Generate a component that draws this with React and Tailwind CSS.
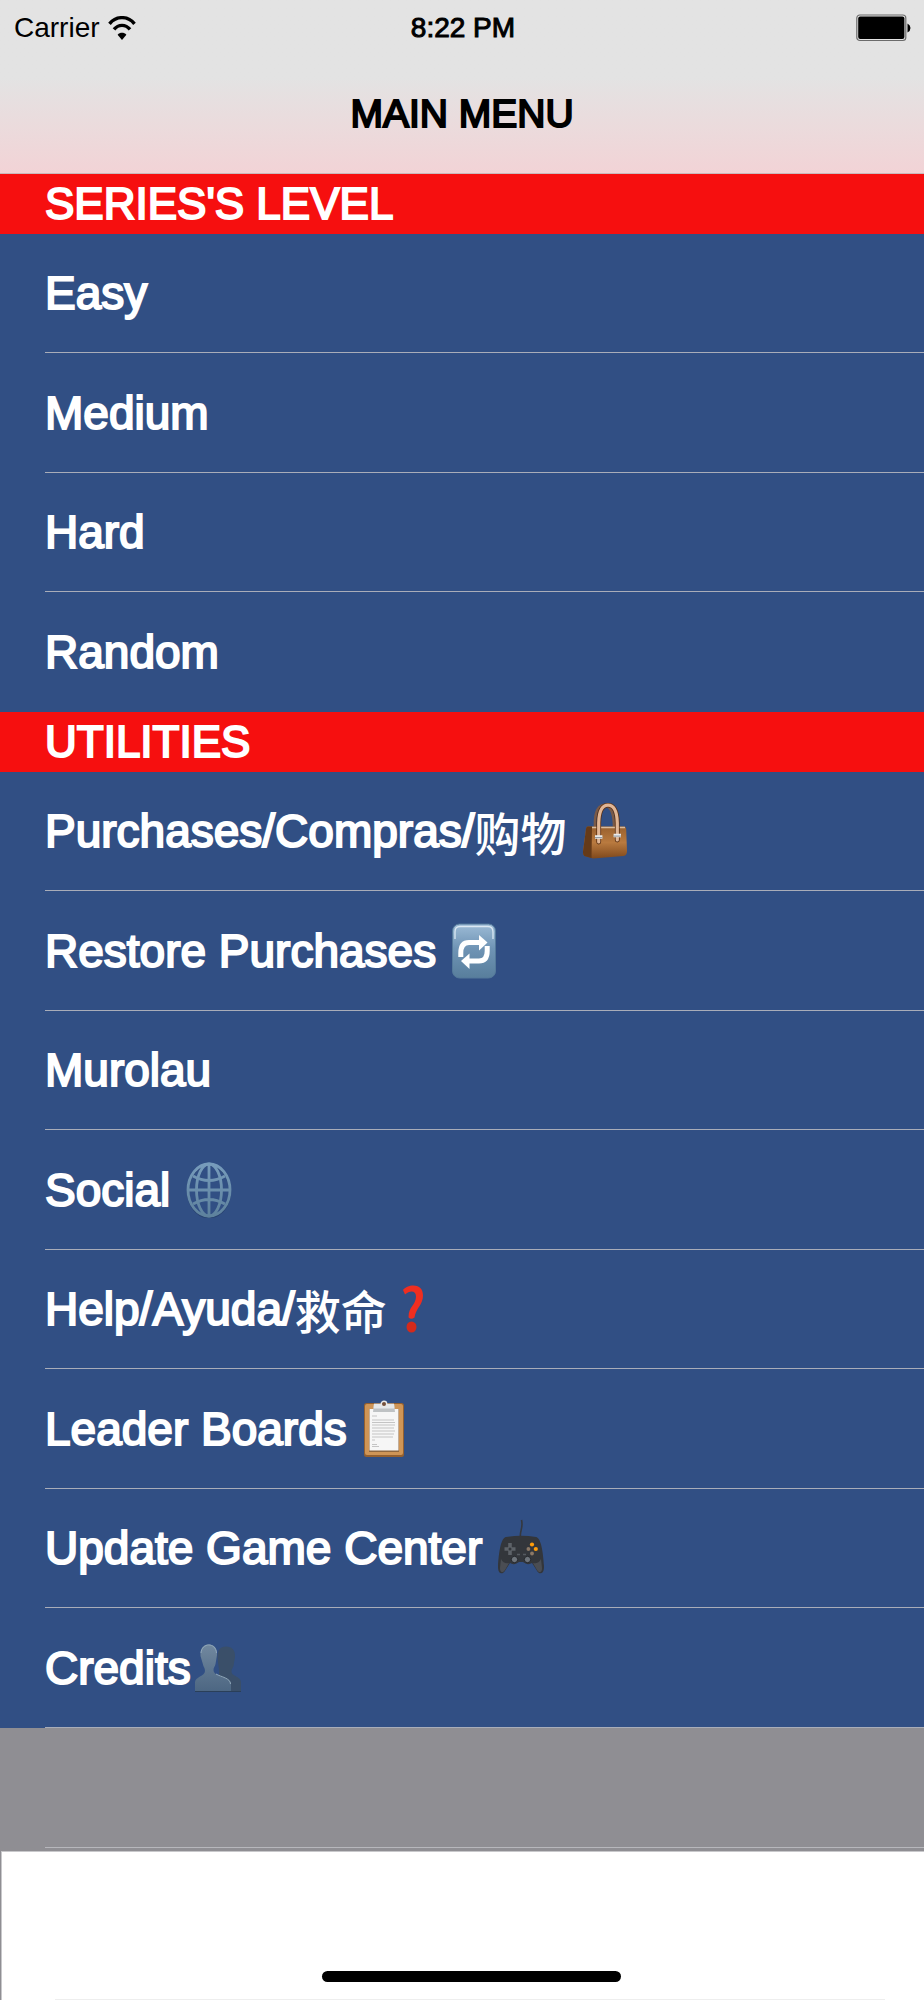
const HEAVY = "[-webkit-text-stroke:2px_currentColor] [paint-order:stroke]";
const MEDIUM = "[-webkit-text-stroke:1px_currentColor]";

function Wifi() {
  return (
    <svg className="h-6 w-7" viewBox="0 0 28 24" fill="none" aria-hidden="true">
      <path d="M1.500 7.800C8.200-.4 19.800-.4 26.500 7.800" stroke="#000" strokeWidth="3.400" />
      <path d="M6 13.400c4.400-5.400 11.600-5.400 16 0" stroke="#000" strokeWidth="3.400" />
      <path d="M14 24l-4.400-5.200c2.400-2.600 6.400-2.600 8.800 0z" fill="#000" />
    </svg>
  );
}

function Battery() {
  return (
    <svg className="h-7 w-14" viewBox="0 0 56 28" aria-hidden="true">
      <rect x=".8" y="1" width="49" height="25.500" rx="3" fill="#e3e3e3" stroke="#6b6b6b" strokeWidth="1.200" />
      <rect x="2.200" y="2.600" width="46.200" height="22.400" rx="2" fill="#000" />
      <path d="M51.500 9.500q3 1.600 3 4.500t-3 4.500z" fill="#000" />
    </svg>
  );
}

function Handbag() {
  return (
    <svg className="h-14 w-11" viewBox="0 0 44 56" fill="none" aria-hidden="true">
      <defs>
        <linearGradient id="bag" x1="0" y1="0" x2="0" y2="1">
          <stop offset="0" stopColor="#98602e" />
          <stop offset=".5" stopColor="#b97a3f" />
          <stop offset="1" stopColor="#80491c" />
        </linearGradient>
      </defs>
      <path d="M12 25V18C12.500 4 19 1 23 2.500c6 2 8 9 8 21.500" stroke="#7a5a48" strokeWidth="2.600" />
      <path d="M4.500 23.500H41q2 0 2.200 3L44 48q0 4.500-3.500 5L10 55.500 1.500 53Q-.2 52 0 48.500L3 26q.3-2.500 1.500-2.500z" fill="url(#bag)" />
      <path d="M4.500 23.500H9L8.500 55 1.500 53Q-.2 52 0 48.500L3 26q.3-2.500 1.500-2.500z" fill="#653a18" />
      <path d="M9 24.500h33" stroke="#d9bb9c" strokeWidth="1.400" />
      <path d="M15.700 39V20C16 8 19.500 2.200 25 2.200S34 8 34.300 20v17" stroke="#5a3013" strokeWidth="4.800" strokeLinecap="round" />
      <path d="M15.700 39V20C16 8 19.500 2.200 25 2.200S34 8 34.300 20v17" stroke="#e0b696" strokeWidth="3.200" strokeLinecap="round" />
      <path d="M12 34h7.400M30.600 32.500H38" stroke="#e9ebec" strokeWidth="3.600" />
      <path d="M12 34.600h7.400M30.600 33.100H38" stroke="#8b9198" strokeWidth="1" />
    </svg>
  );
}

function Repeat() {
  return (
    <svg className="h-14 w-11" viewBox="0 0 44 56" fill="none" aria-hidden="true">
      <defs>
        <linearGradient id="rep" x1="0" y1="0" x2="0" y2="1">
          <stop offset="0" stopColor="#9dbbd6" />
          <stop offset=".45" stopColor="#6f94b5" />
          <stop offset="1" stopColor="#587e9c" />
        </linearGradient>
      </defs>
      <rect x=".5" y="1" width="43" height="54" rx="7" fill="url(#rep)" stroke="#54799a" />
      <path d="M3 16V9q0-5.500 5-5.500h28q5 0 5 5.500v7" stroke="#dbe8f3" strokeWidth="1.300" />
      <path d="M8.800 34v-4q0-10.500 8.200-10.500h10" stroke="#fff" strokeWidth="5" />
      <path d="M27 12l8.500 7.500-8.500 8z" fill="#fff" />
      <path d="M35.200 23v5q0 10-8.200 10H16" stroke="#fff" strokeWidth="5" />
      <path d="M17.500 30.500L9 38l8.500 8z" fill="#fff" />
    </svg>
  );
}

function Globe() {
  return (
    <svg className="h-14 w-[46px]" viewBox="0 0 46 56" fill="none" aria-hidden="true">
      <defs>
        <linearGradient id="glb" gradientUnits="userSpaceOnUse" x1="0" y1="0" x2="0" y2="56">
          <stop offset="0" stopColor="#789dbd" />
          <stop offset="1" stopColor="#5d819c" />
        </linearGradient>
      </defs>
      <ellipse cx="23" cy="29" rx="21" ry="26" stroke="#27406c" strokeWidth="2.400" />
      <g stroke="url(#glb)" strokeWidth="2.800">
        <ellipse cx="23" cy="28" rx="21" ry="26" />
        <ellipse cx="23" cy="28" rx="12.500" ry="26" />
        <path d="M23 2v52M2 28h42M7 14q16 9 32 0M7 42q16-9 32 0" />
      </g>
    </svg>
  );
}

function Question() {
  return (
    <svg className="h-12 w-5" viewBox="0 0 20 48" aria-hidden="true">
      <path d="M0 5C4-.5 20-3 20 10.500 20 20 12.800 23 11.500 32.500Q8 35 5.600 32.500C5 22 13 20 13 11.500 13 5.500 7 5 2 9.500z" fill="#ef2e20" />
      <ellipse cx="8.500" cy="42" rx="5" ry="5.600" fill="#d42a1b" />
    </svg>
  );
}

function Clipboard() {
  return (
    <svg className="h-[58px] w-[42px]" viewBox="0 0 42 58" aria-hidden="true">
      <rect x="1" y="3" width="40" height="54" rx="2.500" fill="#94602f" />
      <rect x="2" y="4" width="38" height="51" rx="2" fill="#cf9556" />
      <path d="M6 9h30v43H6z" fill="#8f673f" />
      <path d="M6.500 9h29v41.500h-29z" fill="#f6f6f6" />
      <path d="M11 3.500h20l1 8.500H10z" fill="#bfc2c4" />
      <path d="M11 4h20l.5 4.500h-21z" fill="#e6e8e9" />
      <circle cx="21" cy="4" r="2.700" fill="#75503a" stroke="#e8e8e8" strokeWidth="1.400" />
      <path d="M9 16h5M9 20h22M9 22.500h23M9 25h23M9 28h22M9 31h23M9 34h22M9 37h21M9 40h3M9 44.500h5M9 46.500h7" stroke="#c4c4c4" strokeWidth="1.100" />
    </svg>
  );
}

function Gamepad() {
  return (
    <svg className="h-[58px] w-[46px]" viewBox="0 0 46 58" fill="none" aria-hidden="true">
      <path d="M22.500 18c-1-6 3-9 1-17" stroke="#35383e" strokeWidth="1.600" />
      <path d="M8 18q15-2.500 30 0c5 1 7 14 8 29 .4 9-5 9-7.500 4L34 44q-3 2-6.500.5L25 43h-4l-2.500 1.500Q15 46 12 44l-4.500 7C5 56-.4 56 0 47 1 32 3 19 8 18z" fill="#33363b" />
      <path d="M3 40c2 4 5 5 8 4l-4 7c-3 4-5 2-5-2zM43 40c-2 4-5 5-8 4l4 7c3 4 5 2 5-2z" fill="#4a4d53" />
      <path d="M12 24v12M6.500 30h11" stroke="#5d6268" strokeWidth="3.600" />
      <circle cx="12" cy="30" r="1.500" fill="#33363b" />
      <circle cx="34" cy="25.500" r="2.100" fill="#ff9d0a" />
      <circle cx="37.800" cy="30" r="2.100" fill="#ff9d0a" />
      <circle cx="30.400" cy="30" r="1.900" fill="#8b7866" />
      <circle cx="34" cy="34.500" r="1.900" fill="#8b7866" />
      <path d="M19 35.500h3M25 35.500h3" stroke="#555a60" strokeWidth="1.400" />
      <circle cx="16.500" cy="40.500" r="3.200" fill="#6e747b" stroke="#22252a" strokeWidth="1" />
      <circle cx="29.500" cy="40.500" r="3.200" fill="#6e747b" stroke="#22252a" strokeWidth="1" />
    </svg>
  );
}

function People() {
  return (
    <svg className="h-12 w-[46px]" viewBox="0 0 46 48" aria-hidden="true">
      <defs>
        <linearGradient id="ppl" x1="0" y1="0" x2="0" y2="1">
          <stop offset="0" stopColor="#71889f" />
          <stop offset="1" stopColor="#4c6682" />
        </linearGradient>
      </defs>
      <path d="M31 2.500c6 0 9.500 4 9 10.500l-1.500 9c-.5 2-2 3-2 5.500 0 5 9.500 4.500 9.500 11V48H24V26l-1.500-12C22.500 6 25 2.500 31 2.500z" fill="#3a4f69" />
      <path d="M13.500.5c6 0 9 4 8.500 10.500L20.500 20c-.5 2.500-2 3.500-2 6 0 3 2.500 4.500 7.500 6.500 7 2.500 10 4 10 8V48H0v-9.500c0-6 10-6 10-11.500 0-3-1.500-4-2-6.500L5.500 12C5 4.500 8 .5 13.500.5z" fill="url(#ppl)" />
      <path d="M6 9C7-1.500 20.500-2 21.500 9M21 30c5 3 14.500 4 14.500 10" fill="none" stroke="#91a8ba" />
      <path d="M0 47.500h46" stroke="#2a3f59" />
    </svg>
  );
}

const LEVELS = [{ label: "Easy" }, { label: "Medium" }, { label: "Hard" }, { label: "Random" }];

const UTILITIES = [
  { label: "Purchases/Compras/", han: "购物", icon: <Handbag />, gap: "gap-4" },
  { label: "Restore Purchases", icon: <Repeat />, gap: "gap-4" },
  { label: "Murolau" },
  { label: "Social", icon: <Globe />, gap: "gap-4" },
  { label: "Help/Ayuda/", han: "救命", icon: <Question />, gap: "gap-4" },
  { label: "Leader Boards", icon: <Clipboard />, gap: "gap-4" },
  { label: "Update Game Center", icon: <Gamepad />, gap: "gap-4" },
  { label: "Credits", icon: <People />, gap: "gap-1" },
];

function Section({ title, items, lastLine }) {
  return (
    <section>
      <h2 className={`flex h-[60px] items-center bg-[#f60f0f] pl-[45px] text-[44px] leading-[60px] text-white ${HEAVY}`}>
        {title}
      </h2>
      <ul className="bg-[#314f84]">
        {items.map((item, i) => (
          <li key={item.label} className="pl-[45px] odd:h-[119px] even:h-[120px]">
            <button
              type="button"
              className={`flex h-full w-full items-center text-left text-[46px] leading-[60px] text-white ${item.gap ?? ""} ${
                i < items.length - 1 || lastLine ? "border-b border-[#a9adb9]" : ""
              }`}
            >
              <span className="flex items-center whitespace-nowrap">
                <span className={HEAVY}>{item.label}</span>
                {item.han && (
                  <span lang="zh-Hans" className="font-['Noto_Sans_CJK_SC',sans-serif] text-[46px] font-medium">
                    {item.han}
                  </span>
                )}
              </span>
              {item.icon}
            </button>
          </li>
        ))}
      </ul>
    </section>
  );
}

export default function App() {
  return (
    <div className="flex min-h-screen flex-col bg-[#8f8e93] font-['Liberation_Sans','Noto_Sans_CJK_SC',sans-serif]">
      <header className="h-[174px] border-b border-[#c9b9bb] bg-linear-to-b from-[#e3e3e3] from-45% to-[#f2d3d6] text-black">
        <div className="grid h-14 grid-cols-3 items-center pr-3 pl-[14px] text-[28px]">
          <div className="flex items-center gap-2">
            <span>Carrier</span>
            <Wifi />
          </div>
          <time className={`text-center ${MEDIUM}`}>8:22 PM</time>
          <div className="flex justify-end">
            <Battery />
          </div>
        </div>
        <h1 className={`pt-7 text-center text-[39px] leading-[60px] ${HEAVY}`}>MAIN MENU</h1>
      </header>

      <main>
        <Section title="SERIES'S LEVEL" items={LEVELS} />
        <Section title="UTILITIES" items={UTILITIES} lastLine />
        <div className="h-[123px] pl-[45px]">
          <div className="h-[120px] border-b border-[#b7b7bc]" />
        </div>
      </main>

      <footer className="ml-px flex flex-1 flex-col justify-end border-t border-l border-[#c8c8cb] bg-white">
        <div className="flex justify-center pl-4">
          <div className="h-[11px] w-[299px] rounded-full bg-black" />
        </div>
        <div className="mr-[39px] ml-[53px] h-[18px] border-b border-[#eeeeee]" />
      </footer>
    </div>
  );
}
